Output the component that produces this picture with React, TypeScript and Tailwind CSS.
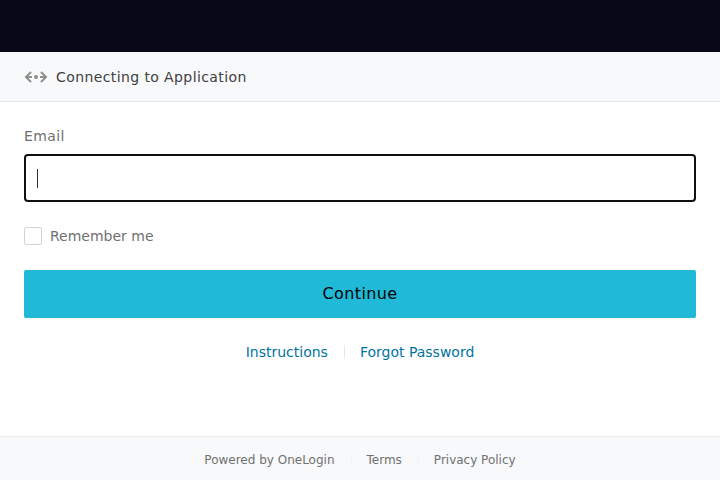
export default function App() {
  return (
    <div className="flex h-[480px] w-[720px] flex-col overflow-hidden bg-white font-['DejaVu_Sans',sans-serif] text-[14px] text-[#707070]">
      <div className="h-[52px] shrink-0 bg-[#090817]" />
      <header className="flex h-[50px] shrink-0 items-center gap-2 border-b border-[#e5e7e9] bg-[#f8f9fb] px-6 text-[#404040]">
        <svg width="24" height="12" viewBox="0 0 24 12" fill="none" stroke="#8e8e8e" strokeWidth="2">
          <path d="M7 1 2 6l5 5M2 6h6M17 1l5 5-5 5M22 6h-6" />
          <circle cx="12" cy="6" r="2" fill="#8e8e8e" stroke="none" />
        </svg>
        <span className="pt-px tracking-[0.4px]">Connecting to Application</span>
      </header>
      <main className="flex grow flex-col px-6 pt-6">
        <label className="h-5 leading-5 tracking-[0.4px]">Email</label>
        <div className="mt-2 flex h-12 shrink-0 items-center rounded-[4px] border-2 border-[#101010] pl-[11px]">
          <span className="h-[19px] w-px bg-[#303030]" />
        </div>
        <label className="mt-6 flex h-5 items-center gap-2">
          <span className="size-[18px] rounded-[2px] border border-[#d4d4d4]" />
          <span>Remember me</span>
        </label>
        <button className="mt-6 h-12 shrink-0 rounded-[2px] bg-[#20b9d8] text-[16px] tracking-[0.4px] text-black">Continue</button>
        <nav className="mt-6 flex h-5 items-center justify-center text-[#00749f]">
          <a>Instructions</a>
          <span className="mr-[15px] ml-4 h-[14px] w-px bg-[#e5e7e9]" />
          <a>Forgot Password</a>
        </nav>
      </main>
      <footer className="flex h-[44px] shrink-0 items-center justify-center border-t border-[#eaecee] bg-[#f8f9fb] pt-[2px] text-[12px]">
        <a>Powered by OneLogin</a>
        <span className="mr-[15px] ml-4 h-[10px] w-px bg-[#f2f3f5]" />
        <a>Terms</a>
        <span className="mr-[15px] ml-4 h-[10px] w-px bg-[#f2f3f5]" />
        <a>Privacy Policy</a>
      </footer>
    </div>
  );
}
